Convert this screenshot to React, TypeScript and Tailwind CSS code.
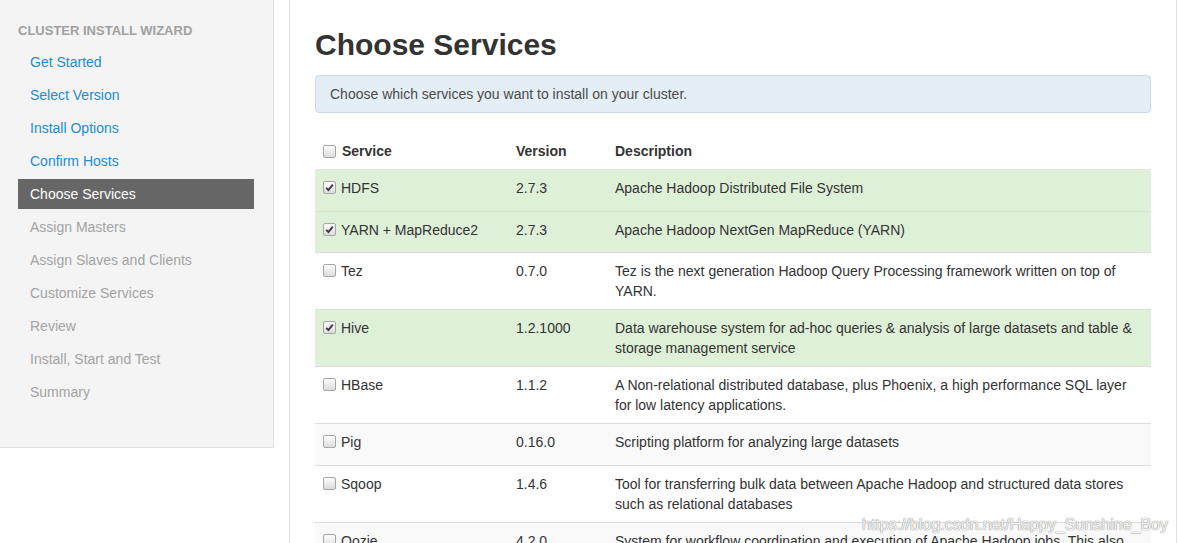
import React from 'react';

type Svc = {
    name: string;
    version: string;
    desc: string;
    checked: boolean;
};

const steps = [
    { label: 'Get Started', state: 'done' },
    { label: 'Select Version', state: 'done' },
    { label: 'Install Options', state: 'done' },
    { label: 'Confirm Hosts', state: 'done' },
    { label: 'Choose Services', state: 'active' },
    { label: 'Assign Masters', state: 'todo' },
    { label: 'Assign Slaves and Clients', state: 'todo' },
    { label: 'Customize Services', state: 'todo' },
    { label: 'Review', state: 'todo' },
    { label: 'Install, Start and Test', state: 'todo' },
    { label: 'Summary', state: 'todo' },
];

const services: Svc[] = [
    { name: 'HDFS', version: '2.7.3', desc: 'Apache Hadoop Distributed File System', checked: true },
    { name: 'YARN + MapReduce2', version: '2.7.3', desc: 'Apache Hadoop NextGen MapReduce (YARN)', checked: true },
    { name: 'Tez', version: '0.7.0', desc: 'Tez is the next generation Hadoop Query Processing framework written on top of YARN.', checked: false },
    { name: 'Hive', version: '1.2.1000', desc: 'Data warehouse system for ad-hoc queries & analysis of large datasets and table & storage management service', checked: true },
    { name: 'HBase', version: '1.1.2', desc: 'A Non-relational distributed database, plus Phoenix, a high performance SQL layer for low latency applications.', checked: false },
    { name: 'Pig', version: '0.16.0', desc: 'Scripting platform for analyzing large datasets', checked: false },
    { name: 'Sqoop', version: '1.4.6', desc: 'Tool for transferring bulk data between Apache Hadoop and structured data stores such as relational databases', checked: false },
    { name: 'Oozie', version: '4.2.0', desc: 'System for workflow coordination and execution of Apache Hadoop jobs. This also includes the installation of the optional Oozie Web Console which relies on and will install the ExtJS Library.', checked: false },
];

// plain checkbox look, grey gradient
const Check = ({ on, className }: { on: boolean; className?: string }) => (
    <span className={'flex items-center justify-center w-[13px] h-[13px] rounded-[2px] border border-[#a6a6a6] bg-gradient-to-b from-[#fdfdfd] to-[#dcdcdc] shrink-0 ' + (className ?? '')}>
        {on && (
            <svg width="9" height="9" viewBox="0 0 9 9">
                <path d="M1.2 4.8 L3.4 7 L7.8 1.6" fill="none" stroke="#3a3a3a" strokeWidth="1.9" />
            </svg>
        )}
    </span>
);

const App = () => {
    return (
        <div
            className="relative w-[1178px] h-[543px] overflow-hidden bg-white flex items-start text-[14px] leading-[20px] text-[#333]"
            style={{ fontFamily: '"Liberation Sans", Arial, sans-serif' }}
        >
            {/* wizard steps */}
            <div className="w-[274px] shrink-0 bg-[#f4f4f4] border-r border-b border-[#e0e0e0] pl-[18px] pr-[19px] pt-[21px] pb-[37px]">
                <div className="font-bold text-[13px] text-[#a0a0a0] uppercase mb-[6px]">Cluster Install Wizard</div>
                {steps.map(s => (
                    <div
                        key={s.label}
                        className={
                            s.state === 'active'
                                ? 'h-[30px] mb-[3px] pl-[12px] flex items-center bg-[#666] text-white'
                                : s.state === 'done'
                                    ? 'h-[30px] mb-[3px] pl-[12px] flex items-center text-[#1f8bd2]'
                                    : 'h-[30px] mb-[3px] pl-[12px] flex items-center text-[#a3a3a3]'
                        }
                    >
                        {s.label}
                    </div>
                ))}
            </div>

            {/* main panel */}
            <div className="ml-[15px] w-[888px] h-[600px] border-x border-[#e2e2e2] px-[25px]">
                <h2 className="mt-[28px] mb-[14px] text-[30px] leading-[33px] font-bold text-[#333]">Choose Services</h2>
                <div className="border border-[#c9dce6] bg-[#e4eff5] rounded-[4px] px-[14px] py-[8px] text-[#4a4a4a]">
                    Choose which services you want to install on your cluster.
                </div>

                <table className="mt-[21px] w-full border-collapse">
                    <thead>
                        <tr className="border-b border-[#e6e6e6]">
                            <th className="w-[193px] text-left align-top px-[8px] pt-[7px] pb-[8px]">
                                <div className="flex items-start gap-[6px] h-[20px]">
                                    <Check on={false} className="mt-[4px]" />
                                    <span>Service</span>
                                </div>
                            </th>
                            <th className="w-[99px] text-left align-top px-[8px] pt-[7px] pb-[8px]">Version</th>
                            <th className="text-left align-top px-[8px] pt-[7px] pb-[8px]">Description</th>
                        </tr>
                    </thead>
                    <tbody>
                        {services.map((s, i) => (
                            <tr
                                key={s.name}
                                className={
                                    s.checked
                                        ? 'border-t border-[#d6e4cf] bg-[#dff0d8]'
                                        : i % 2 === 1
                                            ? 'border-t border-[#dddddd] bg-[#f9f9f9]'
                                            : 'border-t border-[#dddddd] bg-white'
                                }
                            >
                                <td className="align-top px-[8px] py-[8px]">
                                    <div className="flex items-start gap-[5px] min-h-[24.5px]">
                                        <Check on={s.checked} className="mt-[3px]" />
                                        <span>{s.name}</span>
                                    </div>
                                </td>
                                <td className="align-top px-[8px] py-[8px]">{s.version}</td>
                                <td className="align-top px-[8px] py-[8px]">{s.desc}</td>
                            </tr>
                        ))}
                    </tbody>
                </table>
            </div>

            <div className="absolute right-[10px] bottom-[8px] text-[16px] leading-[20px] text-white/90 [text-shadow:0_0_1px_#8a8a8a,0_0_1px_#8a8a8a]">
                https://blog.csdn.net/Happy_Sunshine_Boy
            </div>
        </div>
    );
};

export default App;
